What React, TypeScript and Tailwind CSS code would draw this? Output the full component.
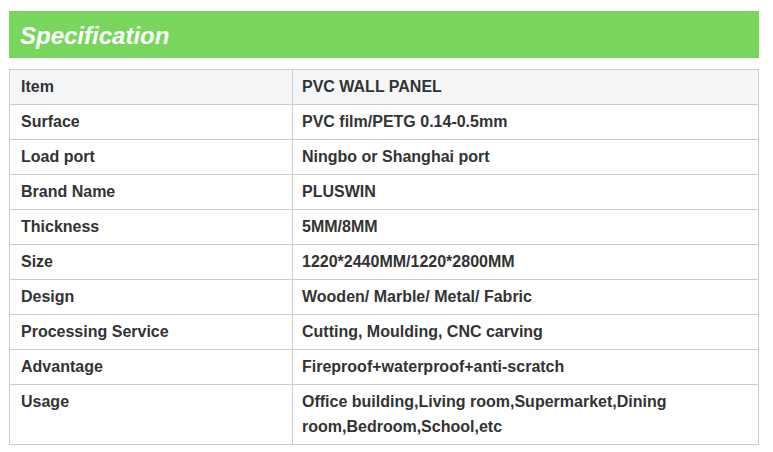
import React from 'react';

const rows: [string, string][] = [
  ['Surface', 'PVC film/PETG 0.14-0.5mm'],
  ['Load port', 'Ningbo or Shanghai port'],
  ['Brand Name', 'PLUSWIN'],
  ['Thickness', '5MM/8MM'],
  ['Size', '1220*2440MM/1220*2800MM'],
  ['Design', 'Wooden/ Marble/ Metal/ Fabric'],
  ['Processing Service', 'Cutting, Moulding, CNC carving'],
  ['Advantage', 'Fireproof+waterproof+anti-scratch'],
  ['Usage', 'Office building,Living room,Supermarket,Dining room,Bedroom,School,etc'],
];

const App = () => {
  return (
    <div className="bg-white w-[773px] h-[452px] px-[9px] pt-[11px] font-['Liberation_Sans',Arial,sans-serif]">
      <div className="w-[750px] h-[47px] bg-[#77d65b] flex items-center px-[11px]">
        <h2 className="text-white text-[24px] font-bold italic leading-none pt-[2px]">Specification</h2>
      </div>
      <table className="mt-[11px] w-[750px] border-collapse text-[16px] font-bold text-[#333333] leading-[25px]">
        <tbody>
          <tr className="bg-[#f5f6f8]">
            <td className="w-[283px] border border-[#cccccc] px-[11px] pt-[4px] pb-[5px] align-top">Item</td>
            <td className="border border-[#cccccc] px-[9px] pt-[4px] pb-[5px] align-top">PVC WALL PANEL</td>
          </tr>
          {rows.map(([k, v]) => (
            <tr key={k}>
              <td className="w-[283px] border border-[#cccccc] px-[11px] pt-[4px] pb-[5px] align-top">{k}</td>
              <td className="border border-[#cccccc] px-[9px] pt-[4px] pb-[5px] align-top">{v}</td>
            </tr>
          ))}
        </tbody>
      </table>
    </div>
  );
};

export default App;
